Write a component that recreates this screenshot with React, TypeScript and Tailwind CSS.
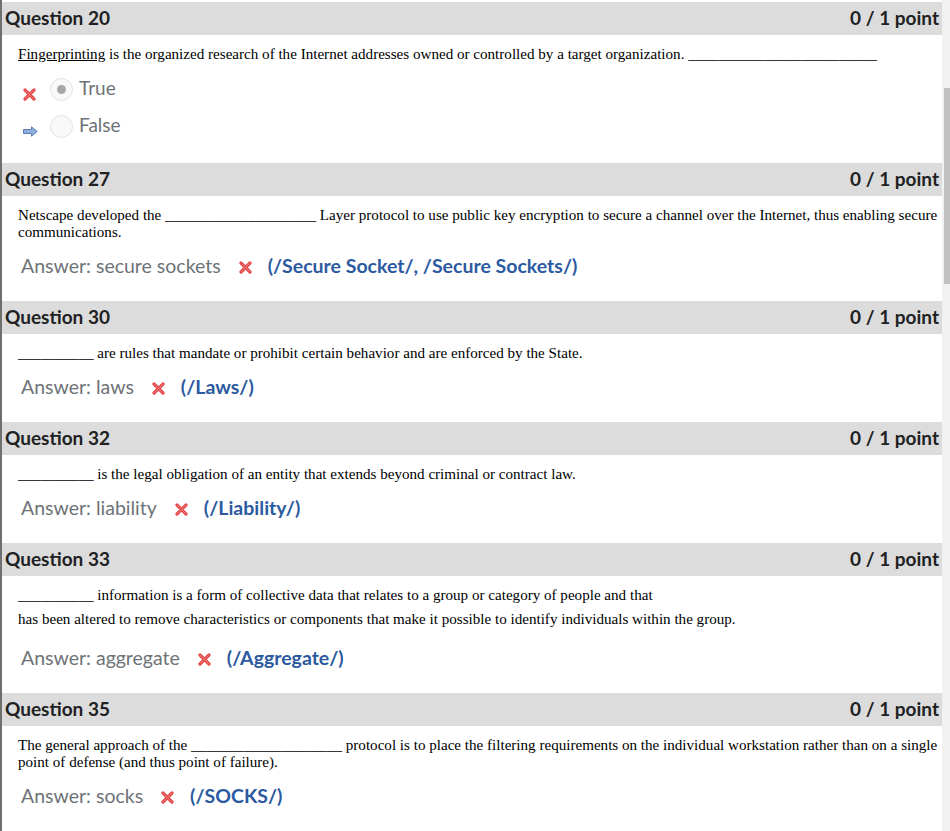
import React from "react";

const lato = { fontFamily: "Lato, 'Open Sans', sans-serif" };

function XIcon() {
  return (
    <svg width="13" height="13" viewBox="0 0 13 13" className="shrink-0">
      <path d="M2 2 L11 11 M11 2 L2 11" stroke="#e44b4b" strokeWidth="3.2" strokeLinecap="round" />
      <path d="M2.5 2.5 L10.5 10.5 M10.5 2.5 L2.5 10.5" stroke="#f07a7a" strokeWidth="1" strokeLinecap="round" />
    </svg>
  );
}

function ArrowIcon() {
  return (
    <svg width="15" height="11" viewBox="0 0 15 11" className="shrink-0">
      <path d="M0.5 3.5 H8.5 V0.8 L14.2 5.5 L8.5 10.2 V7.5 H0.5 Z" fill="#8eaedb" stroke="#5a7db3" strokeWidth="1" strokeLinejoin="round" />
    </svg>
  );
}

function Header({ n }: { n: number }) {
  return (
    <div
      className="h-[33px] bg-[#dcdcdc] flex items-center justify-between pl-[3px] pr-[3px] text-[19px] font-bold text-[#202122]"
      style={lato}
    >
      <span>Question {n}</span>
      <span>0 / 1 point</span>
    </div>
  );
}

function Body({ children }: { children: React.ReactNode }) {
  return (
    <div className="pl-[16px] text-[15.1px] leading-[17px] text-black" style={{ fontFamily: "'Liberation Serif', 'Times New Roman', serif" }}>
      {children}
    </div>
  );
}

function Answer({ given, correct, mt }: { given: string; correct: string; mt: string }) {
  return (
    <div className={`flex items-center h-[24px] pl-[19px] text-[19.5px] ${mt}`} style={lato}>
      <span className="text-[#6e7377]">Answer: {given}</span>
      <span className="ml-[18px] mr-[16px] pt-[2px] flex">
        <XIcon />
      </span>
      <span className="font-bold text-[#2c5aa0]">{correct}</span>
    </div>
  );
}

function Radio({ checked }: { checked: boolean }) {
  return (
    <div className="w-[23px] h-[23px] rounded-full border border-[#e3e3e3] bg-[#f9f9f9] flex items-center justify-center shrink-0">
      {checked && <div className="w-[9px] h-[9px] rounded-full bg-[#a6a6a6]" />}
    </div>
  );
}

function OptionRow({ icon, checked, label }: { icon: React.ReactNode; checked: boolean; label: string }) {
  return (
    <div className="flex items-center h-[37px] pl-[21px]">
      <div className="w-[15px] pt-[9px] flex">{icon}</div>
      <div className="ml-[12px]">
        <Radio checked={checked} />
      </div>
      <span className="ml-[6px] text-[19px] text-[#6e7377] -mt-[3px]" style={lato}>
        {label}
      </span>
    </div>
  );
}

export default function App() {
  return (
    <div className="flex w-[950px] h-[831px] overflow-hidden bg-white">
      <div className="w-[942px] border-l-2 border-[#6f6f6f] pt-[2px]">
        {/* Q20 */}
        <Header n={20} />
        <div className="pt-[11px] pb-[18px]">
          <Body>
            <span className="underline">Fingerprinting</span> is the organized research of the Internet addresses owned or controlled by a target organization. _________________________
          </Body>
          <div className="mt-[8px]">
            <OptionRow icon={<XIcon />} checked={true} label="True" />
            <OptionRow icon={<ArrowIcon />} checked={false} label="False" />
          </div>
        </div>

        {/* Q27 */}
        <Header n={27} />
        <div className="pt-[11px] pb-[23px]">
          <Body>
            Netscape developed the ____________________ Layer protocol to use public key encryption to secure a channel over the Internet, thus enabling secure communications.
          </Body>
          <Answer given="secure sockets" correct="(/Secure Socket/, /Secure Sockets/)" mt="mt-[13px]" />
        </div>

        {/* Q30 */}
        <Header n={30} />
        <div className="pt-[11px] pb-[23px]">
          <Body>__________ are rules that mandate or prohibit certain behavior and are enforced by the State.</Body>
          <Answer given="laws" correct="(/Laws/)" mt="mt-[13px]" />
        </div>

        {/* Q32 */}
        <Header n={32} />
        <div className="pt-[11px] pb-[23px]">
          <Body>__________ is the legal obligation of an entity that extends beyond criminal or contract law.</Body>
          <Answer given="liability" correct="(/Liability/)" mt="mt-[13px]" />
        </div>

        {/* Q33 */}
        <Header n={33} />
        <div className="pt-[11px] pb-[23px]">
          <Body>
            <div>__________ information is a form of collective data that relates to a group or category of people and that</div>
            <div className="mt-[7px]">
              has been altered to remove characteristics or components that make it possible to identify individuals within the group.
            </div>
          </Body>
          <Answer given="aggregate" correct="(/Aggregate/)" mt="mt-[18px]" />
        </div>

        {/* Q35 */}
        <Header n={35} />
        <div className="pt-[11px] pb-[23px]">
          <Body>
            The general approach of the ____________________ protocol is to place the filtering requirements on the individual workstation rather than on a single point of defense (and thus point of failure).
          </Body>
          <Answer given="socks" correct="(/SOCKS/)" mt="mt-[13px]" />
        </div>
      </div>
      <div className="w-[8px] bg-[#f1f1f1]">
        <div className="mt-[88px] ml-[2px] w-[6px] h-[196px] bg-[#c1c1c1]" />
      </div>
    </div>
  );
}
